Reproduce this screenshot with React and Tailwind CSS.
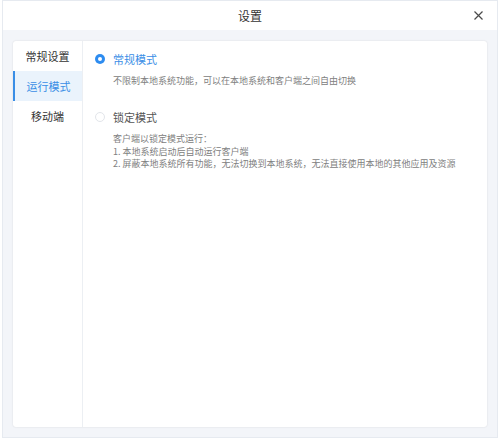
import React from "react";

const font = { fontFamily: '"Noto Sans CJK SC", "Noto Sans", sans-serif' };

export default function App() {
  return (
    <div className="w-[500px] h-[440px] bg-white" style={font}>
      <div className="mx-[2px] h-[438px] flex flex-col border border-[#e6eaf0] bg-[#f3f5f9]">
        <div className="h-[29px] bg-white flex items-center justify-center relative shrink-0">
          <span className="text-[12px] text-[#333]">设置</span>
          <svg className="absolute right-[13px] top-[9px]" width="11" height="11" viewBox="0 0 11 11">
            <path d="M1.5 1.5 L9.5 9.5 M9.5 1.5 L1.5 9.5" stroke="#4a4a4a" strokeWidth="1.2" fill="none" />
          </svg>
        </div>
        <div className="flex-1 px-[10px] pt-[11px] pb-[10px] flex">
          <div className="flex-1 bg-white rounded-[3px] shadow-[0_0_2px_rgba(0,0,0,0.12)] flex">
            <div className="w-[70px] border-r border-[#eceff3] shrink-0">
              <div className="h-[30px] flex items-center justify-center text-[11px] text-[#333]">常规设置</div>
              <div className="h-[30px] flex items-center justify-center text-[11px] text-[#3a8ee6] bg-[#eaf3fc] border-l-2 border-[#3a8ee6]">运行模式</div>
              <div className="h-[31px] flex items-center justify-center text-[11px] text-[#333]">移动端</div>
            </div>
            <div className="flex-1 pl-[12px] pt-[10px]">
              <div className="flex items-center h-[16px]">
                <span className="w-[10px] h-[10px] rounded-full bg-[#2d8cf0] flex items-center justify-center">
                  <span className="w-[4px] h-[4px] rounded-full bg-white" />
                </span>
                <span className="ml-[8px] text-[11px] text-[#3a8ee6]">常规模式</span>
              </div>
              <div className="ml-[18px] mt-[7px] text-[9px] text-[#808080] leading-[14px]">
                不限制本地系统功能，可以在本地系统和客户端之间自由切换
              </div>
              <div className="flex items-center h-[16px] mt-[21px]">
                <span className="w-[10px] h-[10px] rounded-full border border-[#e2e5ea] bg-white" />
                <span className="ml-[8px] text-[11px] text-[#555]">锁定模式</span>
              </div>
              <div className="ml-[18px] mt-[8px] text-[9px] text-[#808080] leading-[12.5px]">
                <div>客户端以锁定模式运行：</div>
                <div>1. 本地系统启动后自动运行客户端</div>
                <div>2. 屏蔽本地系统所有功能，无法切换到本地系统，无法直接使用本地的其他应用及资源</div>
              </div>
            </div>
          </div>
        </div>
      </div>
    </div>
  );
}
